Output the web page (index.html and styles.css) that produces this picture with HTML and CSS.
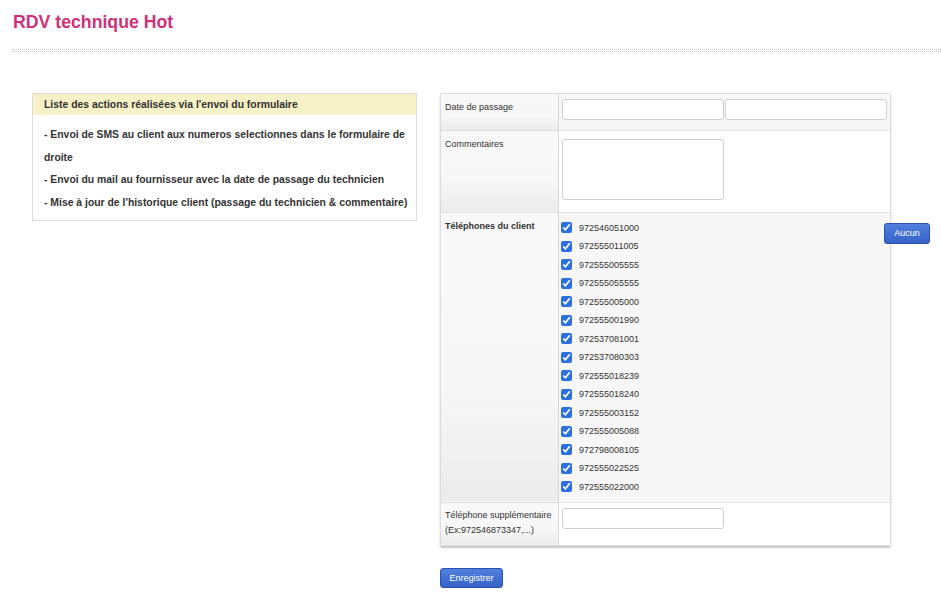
FILE: index.html
```html
<!DOCTYPE html>
<html lang="fr">
<head>
<meta charset="utf-8">
<title>RDV technique Hot</title>
<link rel="stylesheet" href="styles.css">
</head>
<body>
<header class="page-head">
  <h1 class="title">RDV technique Hot</h1>
  <div class="dots"></div>
</header>
<main class="main">
  <section class="info">
    <div class="info-head">Liste des actions réalisées via l'envoi du formulaire</div>
    <div class="info-body">
      <p>- Envoi de SMS au client aux numeros selectionnes dans le formulaire de droite</p>
      <p>- Envoi du mail au fournisseur avec la date de passage du technicien</p>
      <p>- Mise à jour de l'historique client (passage du technicien &amp; commentaire)</p>
    </div>
  </section>
  <section class="form-col">
    <div class="form-box">
      <table class="form">
        <tr class="row-gray row-date">
          <th class="lbl">Date de passage</th>
          <td class="val"><div class="dates"><input class="inp" type="text"><input class="inp" type="text"></div></td>
        </tr>
        <tr class="row-white row-comm">
          <th class="lbl">Commentaires</th>
          <td class="val"><textarea class="area"></textarea></td>
        </tr>
        <tr class="row-gray row-tel">
          <th class="lbl lbl-bold">Téléphones du client</th>
          <td class="val tel-cell">
            <ul class="phones">
              <li><input type="checkbox" checked><span>972546051000</span></li>
              <li><input type="checkbox" checked><span>972555011005</span></li>
              <li><input type="checkbox" checked><span>972555005555</span></li>
              <li><input type="checkbox" checked><span>972555055555</span></li>
              <li><input type="checkbox" checked><span>972555005000</span></li>
              <li><input type="checkbox" checked><span>972555001990</span></li>
              <li><input type="checkbox" checked><span>972537081001</span></li>
              <li><input type="checkbox" checked><span>972537080303</span></li>
              <li><input type="checkbox" checked><span>972555018239</span></li>
              <li><input type="checkbox" checked><span>972555018240</span></li>
              <li><input type="checkbox" checked><span>972555003152</span></li>
              <li><input type="checkbox" checked><span>972555005088</span></li>
              <li><input type="checkbox" checked><span>972798008105</span></li>
              <li><input type="checkbox" checked><span>972555022525</span></li>
              <li><input type="checkbox" checked><span>972555022000</span></li>
            </ul>
            <button class="btn btn-aucun" type="button">Aucun</button>
          </td>
        </tr>
        <tr class="row-white row-supp">
          <th class="lbl">Téléphone supplémentaire<br>(Ex:972546873347,...)</th>
          <td class="val"><input class="inp" type="text"></td>
        </tr>
      </table>
    </div>
    <button class="btn btn-save" type="button">Enregistrer</button>
  </section>
</main>
</body>
</html>
```
FILE: styles.css
```css
html, body {
  margin: 0;
  padding: 0;
  background: #fff;
}
body {
  font-family: "Liberation Sans", Arial, sans-serif;
  color: #333;
  width: 941px;
  overflow: hidden;
}
.page-head {
  padding: 11px 0 0 12px;
}
.title {
  margin: 0 0 0 1px;
  font-size: 17.7px;
  line-height: 22px;
  font-weight: bold;
  color: #d0307a;
}
.dots {
  margin-top: 16px;
  height: 1px;
  border-top: 1px dotted #c8c8c8;
  border-bottom: 1px dotted #c8c8c8;
}
.main {
  display: flex;
  align-items: flex-start;
  gap: 23px;
  padding: 41px 0 0 32px;
}
.info {
  width: 383px;
  border: 1px solid #dcdcdc;
}
.info-head {
  background: #f6f1c6;
  font-size: 10.4px;
  font-weight: bold;
  color: #333;
  line-height: 21px;
  padding: 0 0 0 11px;
}
.info-body {
  padding: 9px 4px 6px 11px;
}
.info-body p {
  margin: 0;
  font-size: 10.4px;
  font-weight: bold;
  line-height: 22.5px;
  color: #333;
}
.form-col {
  width: 451px;
}
.form-box {
  border: 1px solid #dcdcdc;
  box-shadow: 0 2px 2px #c8c8c8;
  border-radius: 2px;
}
.form {
  width: 100%;
  border-collapse: collapse;
  font-size: 9px;
}
.form tr + tr {
  border-top: 1px solid #e2e2e2;
}
.lbl {
  width: 112px;
  text-align: left;
  vertical-align: top;
  font-weight: normal;
  padding: 6px 3px 0 4px;
  line-height: 15px;
  color: #333;
  border-right: 1px solid #d8d8d8;
  background: linear-gradient(#f8f8f8 0%, #f7f7f7 60%, #ebebeb 100%);
}
.lbl-bold {
  font-weight: bold;
}
.val {
  vertical-align: top;
  padding: 0 3px 0 3px;
}
.row-gray .val {
  background: #f7f7f7;
}
.row-white .val {
  background: #fff;
}
.row-date { height: 36px; }
.row-date .val { padding-top: 5px; }
.row-comm { height: 82px; }
.row-comm .val { padding-top: 8px; }
.row-tel { height: 290px; }
.row-supp { height: 43px; }
.row-supp .val { padding-top: 5px; }
.row-supp .lbl { padding-top: 5px; }
.dates {
  display: flex;
  gap: 1px;
}
.inp {
  box-sizing: border-box;
  width: 162px;
  height: 21px;
  border: 1px solid #cfcfcf;
  border-radius: 3px;
  background: #fff;
  margin: 0;
  padding: 0 4px;
  font: inherit;
}
.area {
  box-sizing: border-box;
  width: 162px;
  height: 61px;
  border: 1px solid #cfcfcf;
  border-radius: 3px;
  background: #fff;
  margin: 0;
  resize: none;
  display: block;
}
.tel-cell {
  position: relative;
  padding-top: 6px;
}
.phones {
  list-style: none;
  margin: 0;
  padding: 0;
}
.phones li {
  display: flex;
  align-items: center;
  height: 18.5px;
}
.phones input {
  width: 11px;
  height: 11px;
  margin: 0 7px 0 -1px;
  accent-color: #2c6fe0;
}
.phones span {
  font-size: 9px;
  color: #333;
}
.btn {
  font-family: "Liberation Sans", Arial, sans-serif;
  font-size: 9px;
  color: #fff;
  border: 1px solid #2b52b0;
  border-radius: 3px;
  background: linear-gradient(#5181de, #3562c8);
  padding: 0;
  cursor: pointer;
}
.btn-aucun {
  position: absolute;
  top: 10px;
  right: -40px;
  width: 46px;
  height: 21px;
}
.btn-save {
  margin-top: 22px;
  width: 63px;
  height: 20px;
}
```
